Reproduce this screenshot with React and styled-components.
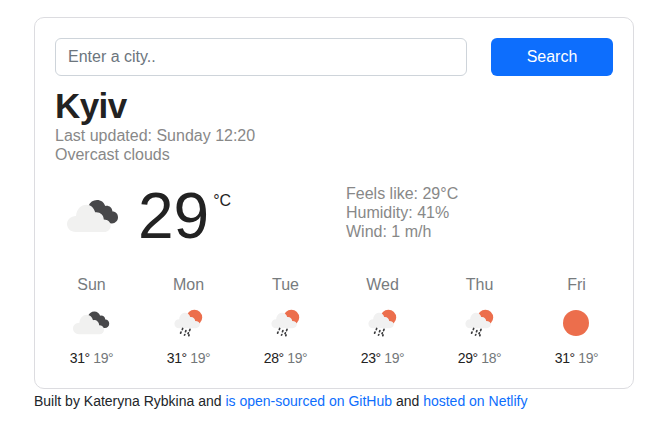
import React from "react";
import styled, { createGlobalStyle } from "styled-components";

const GlobalStyle = createGlobalStyle`
  *, *::before, *::after { box-sizing: border-box; }
  body {
    margin: 0;
    background: #fff;
    color: #212529;
    font-family: "Liberation Sans", Arial, sans-serif;
    font-size: 16px;
    line-height: 19px;
  }
`;

const Page = styled.div`
  width: 600px;
  margin: 17px 0 0 34px;
`;

const Card = styled.main`
  height: 372px;
  padding: 20px;
  border: 1px solid #dcdce0;
  border-radius: 10px;
`;

const SearchForm = styled.form`
  display: grid;
  grid-template-columns: 412px 122px;
  gap: 24px;
  margin: 0 0 10px;
`;

const CityInput = styled.input`
  height: 38px;
  min-width: 0;
  padding: 6px 12px;
  border: 1px solid #ced4da;
  border-radius: 6px;
  background: #fff;
  font: inherit;
  &::placeholder { color: #6c757d; opacity: 1; }
`;

const SearchButton = styled.button`
  height: 38px;
  padding: 0 0 2px;
  border: 0;
  border-radius: 6px;
  background: #0d6efd;
  color: #fff;
  font: inherit;
`;

const City = styled.h1`
  margin: 0;
  padding-bottom: 1px;
  color: #222;
  font-size: 35px;
  line-height: 39px;
  letter-spacing: -0.6px;
  font-weight: 700;
`;

const InfoList = styled.ul`
  margin: 0;
  padding: 0;
  list-style: none;
  color: #888;
`;

const Current = styled.section`
  display: grid;
  grid-template-columns: 267px 267px;
  column-gap: 24px;
  height: 77px;
  margin-top: 20px;
`;

const Reading = styled.div`
  display: flex;
  align-items: flex-start;
`;

const MainIcon = styled.svg`
  width: 54px;
  height: 36px;
  margin: 14px 18px 0 11px;
`;

const Temperature = styled.strong`
  color: #222;
  font-size: 64px;
  line-height: 64px;
  font-weight: 400;
`;

const Unit = styled.span`
  margin: 7px 0 0 4px;
  color: #222;
`;

const Forecast = styled.section`
  display: grid;
  grid-template-columns: repeat(6, 73px);
  column-gap: 24px;
  margin-top: 14px;
`;

const Day = styled.div`
  display: flex;
  flex-direction: column;
  align-items: center;
`;

const DayName = styled.div`
  color: #777b7e;
`;

const DayIcon = styled.svg`
  width: 50px;
  height: 50px;
  margin: 4px 1px 0 0;
`;

const DayTemps = styled.div`
  margin-top: 2px;
  color: #222;
  font-size: 14px;
  line-height: 17px;
  letter-spacing: -0.4px;
`;

const Low = styled.span`
  color: #73777a;
`;

const Footer = styled.footer`
  margin-top: 4px;
  font-size: 14px;
  line-height: 17px;
`;

const Link = styled.a`
  color: #0d6efd;
  text-decoration: none;
`;

function CloudsShape() {
  return (
    <>
      <path
        fill="#48484a"
        d="M22.3 8.2C24 4.2 27 2 31 2c4 0 7 2.3 8.2 6 3.6-.8 6.9 1.4 7.3 5.5 3.4 0 5.5 2.6 5.5 5.8 0 3.4-2.6 6.1-6.1 6.1-2.7 0-4.4-1.2-5.5-3-2.1.8-4.5.5-6-.9-1-3.7-4.3-6.3-8-5.8-.9-3.2-1.5-5.4-4.1-7.5z"
      />
      <path
        fill="#f1f1f0"
        d="M9.5 34C4.8 34 1 30.4 1 26c0-4.4 3.6-8 9-8.1C10.6 11.2 15 6.8 20.5 6.8c4.4 0 7.4 3 8.7 7.5 4.5-.7 8.5 2.4 8.6 7.1 4.2.1 6.9 2.7 6.9 6.3 0 3.7-2.8 6.3-6.5 6.3z"
      />
    </>
  );
}

function SmallIcon({ kind }) {
  if (kind === "sun") {
    return (
      <DayIcon viewBox="0 0 50 50">
        <circle cx="25" cy="25" r="13" fill="#ec6e4c" />
      </DayIcon>
    );
  }
  if (kind === "rain") {
    return (
      <DayIcon viewBox="0 0 50 50">
        <circle cx="31.4" cy="19.5" r="7.8" fill="#ec6e4c" />
        <path
          fill="#f1f1f1"
          d="M16 30.2c-2.6 0-4.6-2-4.6-4.5s2-4.5 4.8-4.5c.3-3.9 2.7-6.5 6-6.5 2.5 0 4.3 1.8 5 4.3 2.7-.4 4.9 1.4 5 4.1 2.9 0 4.6 1.4 4.6 3.5 0 2.1-1.7 3.6-4 3.6z"
        />
        <path
          stroke="#3c3c3e"
          strokeWidth="1.7"
          strokeLinecap="round"
          fill="none"
          d="M19.7 30.5l-.4 1M18 34.1l-.4 1M22.9 32.6l-.4 1.1M21.8 36.6l-.3.5M27 31.4l-.4 1.2M25.4 34.8l-.4.8M26.1 37l-.3.7"
        />
      </DayIcon>
    );
  }
  return (
    <DayIcon viewBox="0 0 50 50">
      <g transform="translate(6.3 12) scale(.71)">
        <CloudsShape />
      </g>
    </DayIcon>
  );
}

const days = [
  ["Sun", "clouds", 31, 19],
  ["Mon", "rain", 31, 19],
  ["Tue", "rain", 28, 19],
  ["Wed", "rain", 23, 19],
  ["Thu", "rain", 29, 18],
  ["Fri", "sun", 31, 19],
];

export default function App() {
  return (
    <>
      <GlobalStyle />
      <Page>
        <Card>
          <SearchForm onSubmit={(event) => event.preventDefault()}>
            <CityInput type="text" placeholder="Enter a city.." />
            <SearchButton type="submit">Search</SearchButton>
          </SearchForm>
          <City>Kyiv</City>
          <InfoList>
            <li>Last updated: Sunday 12:20</li>
            <li>Overcast clouds</li>
          </InfoList>
          <Current>
            <Reading>
              <MainIcon viewBox="0 0 54 36">
                <CloudsShape />
              </MainIcon>
              <Temperature>29</Temperature>
              <Unit>°C</Unit>
            </Reading>
            <InfoList>
              <li>Feels like: 29°C</li>
              <li>Humidity: 41%</li>
              <li>Wind: 1 m/h</li>
            </InfoList>
          </Current>
          <Forecast>
            {days.map(([name, kind, high, low]) => (
              <Day key={name}>
                <DayName>{name}</DayName>
                <SmallIcon kind={kind} />
                <DayTemps>
                  {high}° <Low>{low}°</Low>
                </DayTemps>
              </Day>
            ))}
          </Forecast>
        </Card>
        <Footer>
          Built by Kateryna Rybkina and{" "}
          <Link href="#">is open-sourced on GitHub</Link> and{" "}
          <Link href="#">hosted on Netlify</Link>
        </Footer>
      </Page>
    </>
  );
}
